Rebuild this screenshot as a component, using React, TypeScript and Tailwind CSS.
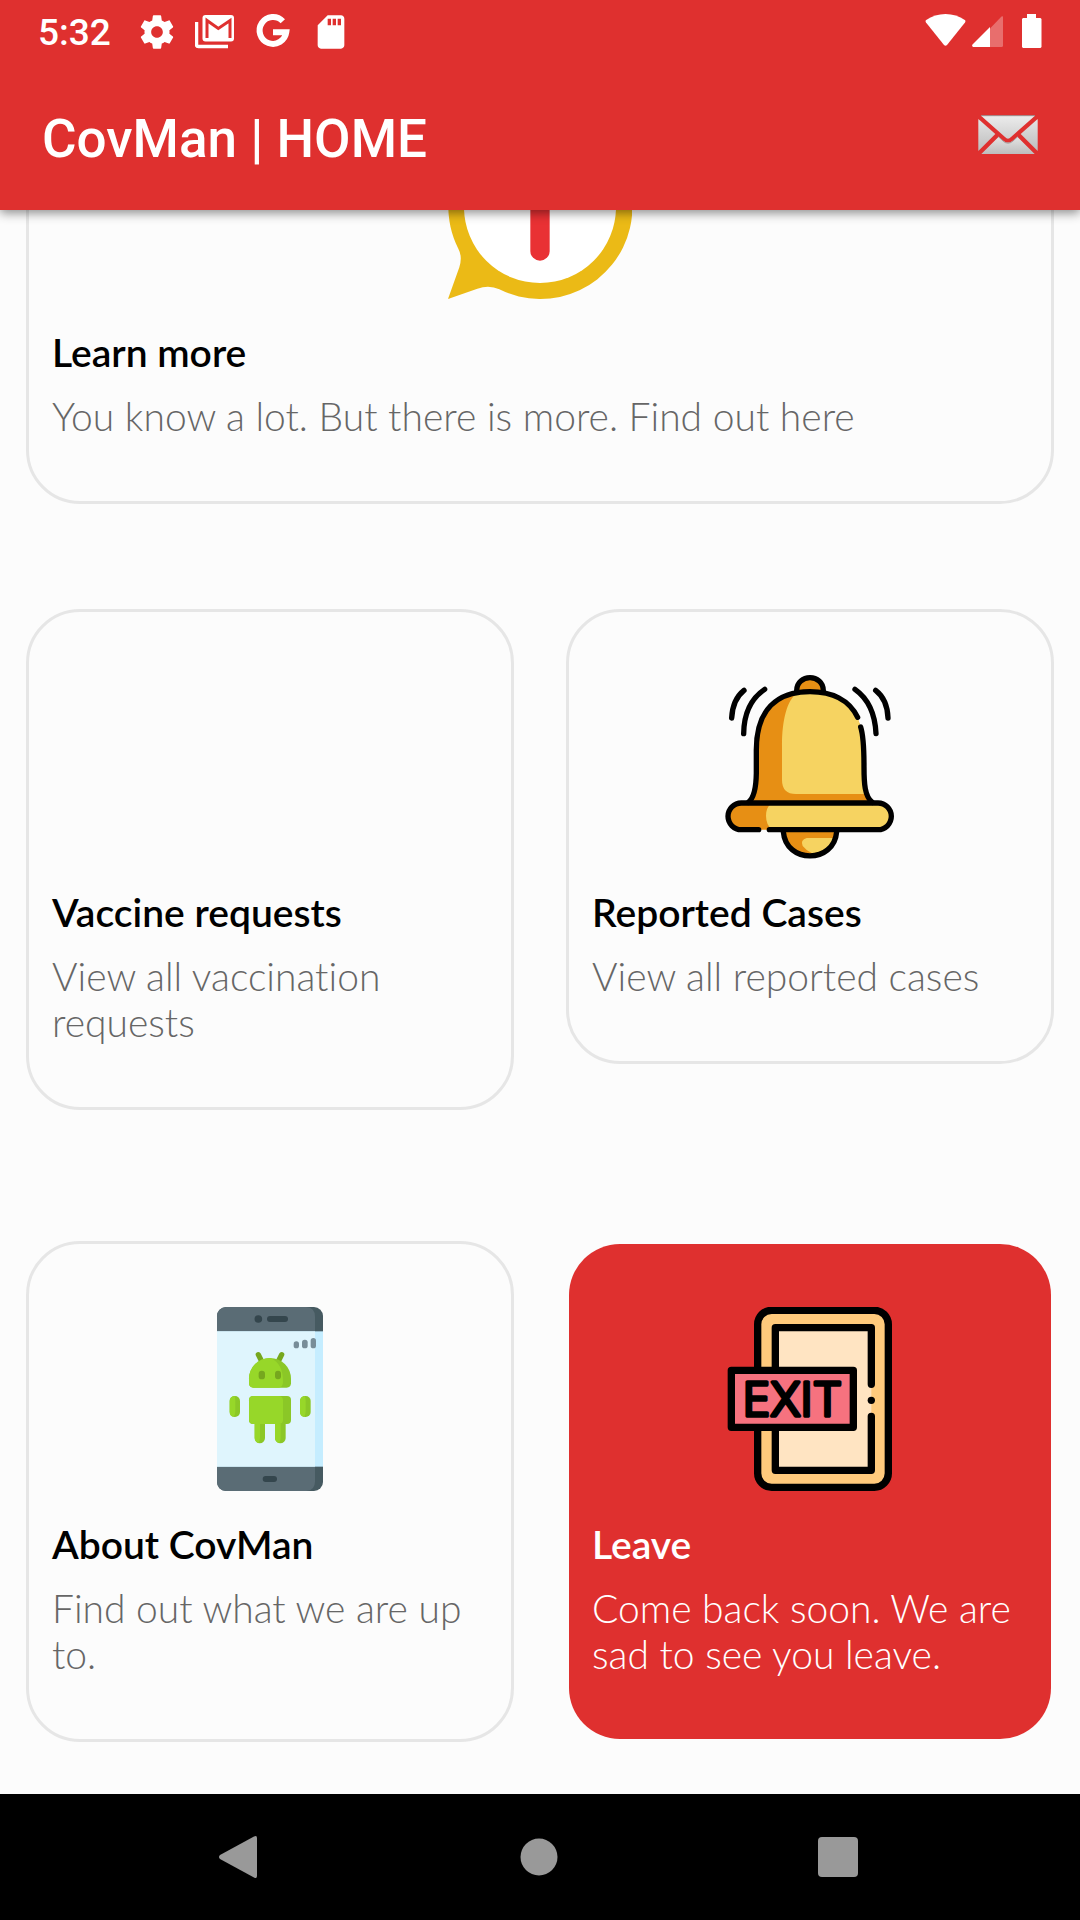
import type { ReactNode } from "react";

const STATUS_ICON = "h-10 w-10";

function GearIcon() {
  return (
    <svg viewBox="0 0 24 24" className={STATUS_ICON} fill="currentColor" aria-hidden="true">
      <path d="M19.43 12.98c.04-.32.07-.64.07-.98s-.03-.66-.07-.98l2.11-1.65c.19-.15.24-.42.12-.64l-2-3.46c-.12-.22-.39-.3-.61-.22l-2.49 1c-.52-.4-1.08-.73-1.69-.98l-.38-2.65A.488.488 0 0 0 14 2h-4c-.25 0-.46.18-.49.42l-.38 2.65c-.61.25-1.17.59-1.69.98l-2.49-1c-.23-.09-.49 0-.61.22l-2 3.46c-.13.22-.07.49.12.64l2.11 1.65c-.04.32-.07.65-.07.98s.03.66.07.98l-2.11 1.65c-.19.15-.24.42-.12.64l2 3.46c.12.22.39.3.61.22l2.49-1c.52.4 1.08.73 1.69.98l.38 2.65c.03.24.24.42.49.42h4c.25 0 .46-.18.49-.42l.38-2.65c.61-.25 1.17-.59 1.69-.98l2.49 1c.23.09.49 0 .61-.22l2-3.46c.12-.22.07-.49-.12-.64l-2.11-1.65zM12 15.5c-1.93 0-3.5-1.57-3.5-3.5s1.57-3.5 3.5-3.5 3.5 1.57 3.5 3.5-1.57 3.5-3.5 3.5z" />
    </svg>
  );
}

function MailStackIcon() {
  return (
    <svg viewBox="0 0 40 40" className={STATUS_ICON} fill="none" aria-hidden="true">
      <path d="M1.5 10v22.5a2 2 0 0 0 2 2H33" stroke="currentColor" strokeWidth="3.5" />
      <rect x="7.5" y="3" width="31.5" height="26.5" rx="3" fill="currentColor" />
      <path d="M12 26V8.500L23.300 16.500L35 8.500V26" stroke="#df302f" strokeWidth="3" />
    </svg>
  );
}

function GoogleIcon() {
  return (
    <svg viewBox="0 0 40 40" className={STATUS_ICON} fill="none" aria-hidden="true">
      <path d="M29.800 9.300A13.400 13.400 0 1 0 33.300 20.200H20" stroke="currentColor" strokeWidth="6" />
    </svg>
  );
}

function SdCardIcon() {
  return (
    <svg viewBox="0 0 24 24" className={STATUS_ICON} fill="currentColor" aria-hidden="true">
      <path d="M18 2h-8L4.020 8 4 20c0 1.100.9 2 2 2h12c1.100 0 2-.9 2-2V4c0-1.100-.9-2-2-2zm-6 6h-2V4h2v4zm3 0h-2V4h2v4zm3 0h-2V4h2v4z" />
    </svg>
  );
}

function WifiIcon() {
  return (
    <svg viewBox="0 0 41 40" className="h-10 w-[41px]" fill="currentColor" aria-hidden="true">
      <path d="M1 10.500Q0 9 1.200 8C12-.1 29-.1 39.800 8Q41 9 40 10.500L22 33Q20.500 34.500 19 33Z" />
    </svg>
  );
}

function SignalIcon() {
  return (
    <svg viewBox="0 0 32 40" className="h-10 w-8" fill="currentColor" aria-hidden="true">
      <path d="M18 16.500L29.500 4.600Q31 3.500 31 5V33.500Q31 35 29.500 35H18Z" opacity="0.3" />
      <path d="M18 15V35H1Q-.5 34 .5 32.500Z" />
    </svg>
  );
}

function BatteryIcon() {
  return (
    <svg viewBox="0 0 20 40" className="h-10 w-5" fill="currentColor" aria-hidden="true">
      <path d="M5 2H14V6H18.500L19.500 7V35L18.500 36H1L0 35V7L1 6H5Z" />
    </svg>
  );
}

function EnvelopeIcon() {
  return (
    <svg viewBox="0 0 180 120" className="h-10 w-[60px]" aria-hidden="true">
      <defs>
        <linearGradient id="paper" x1="0" y1="0" x2="0" y2="1">
          <stop offset="0" stopColor="#e4e4e4" />
          <stop offset="1" stopColor="#bdbdbd" />
        </linearGradient>
        <linearGradient id="flap" x1="0" y1="0" x2="0" y2="1">
          <stop offset="0" stopColor="#ececec" />
          <stop offset="1" stopColor="#cfcfcf" />
        </linearGradient>
      </defs>
      <path d="M9 2H171L99 66Q90 76 81 66Z" fill="url(#flap)" />
      <path d="M9 2H171" stroke="#9c8f8f" strokeWidth="3" />
      <path d="M1 12L52 57L1 108Z" fill="url(#paper)" />
      <path d="M179 12L128 57L179 108Z" fill="url(#paper)" />
      <path d="M10 117L62 65L76 77Q90 88 104 77L118 65L170 117Z" fill="url(#paper)" />
      <path d="M60 64L76 79Q90 90 104 79L120 64" fill="none" stroke="#8f8080" strokeWidth="3" opacity="0.7" />
    </svg>
  );
}

const ART = "mx-auto block h-[184px] w-[184px]";

function InfoArt() {
  return (
    <svg viewBox="84 -225 552 552" className={ART} aria-hidden="true">
      <path
        d="M360 -225A276 276 0 1 1 238 298Q208 284 172 296L84 327L118 232Q128 200 115 176A276 276 0 0 1 360 -225Z"
        fill="#ebba16"
      />
      <circle cx="360" cy="51" r="228" fill="#fff" />
      <path d="M360 -10V183" stroke="#e93134" strokeWidth="58" strokeLinecap="round" />
      <circle cx="360" cy="-90" r="30" fill="#e93134" />
    </svg>
  );
}

function BellArt() {
  return (
    <svg viewBox="54 75 552 552" className={ART} fill="none" strokeLinecap="round" aria-hidden="true">
      <path d="M290 125C290 70 370 70 370 125Z" fill="#e78f14" />
      <path d="M250 538C254 642 406 642 410 538Z" fill="#e78f14" />
      <path d="M401 564H320Q300 570 308 588Q320 603 336 610Q384 606 401 564Z" fill="#f6d361" />
      <path d="M155 457Q168 430 168 380V300C168 180 230 125 330 125C430 125 490 180 491 300V380Q491 430 506 457Z" fill="#e78f14" />
      <path d="M292 128C262 150 246 205 246 290V390Q246 432 288 432H496Q491 410 491 380V300C490 180 430 125 330 125Z" fill="#f6d361" />
      <rect x="84" y="459" width="490" height="80" rx="40" fill="#e78f14" />
      <path d="M210 464H536Q574 468 574 499Q574 536 536 539H216Q198 524 198 497Q198 474 210 464Z" fill="#f6d361" />
      <g stroke="#000" strokeWidth="16">
        <path d="M290 122C290 70 370 70 370 122" />
        <path d="M250 545C258 642 402 642 410 545" />
        <path d="M473 202C448 150 396 125 330 125C230 125 169 180 169 300V370Q168 440 145 457" />
        <path d="M482 231Q492 262 492 350C492 400 494 440 517 457" />
        <path d="M176 539H124A40 40 0 0 1 124 459H534A40 40 0 0 1 534 539H208" />
        <path d="M132 121Q98 148 95 204" />
        <path d="M194 118Q132 160 131 251" />
        <path d="M527 121Q562 148 564 204" />
        <path d="M465 118Q524 160 528 251" />
      </g>
    </svg>
  );
}

function PhoneArt() {
  return (
    <svg viewBox="-66 51 552 552" className={ART} aria-hidden="true">
      <rect x="51" y="51" width="318" height="552" rx="27" fill="#465a61" />
      <path d="M78 51H319Q345 53 345 80V575Q345 600 319 603H78Q51 600 51 575V80Q51 54 78 51Z" fill="#5a6c75" />
      <rect x="51" y="124" width="318" height="406" fill="#c5edff" />
      <rect x="51" y="124" width="294" height="406" fill="#dff5fd" />
      <g fill="#34464d">
        <circle cx="175" cy="87" r="11.500" />
        <rect x="201" y="78" width="63" height="18" rx="9" />
        <rect x="188" y="558" width="43" height="18" rx="9" />
      </g>
      <g fill="#788d98">
        <rect x="281" y="154" width="16" height="21" rx="8" />
        <rect x="306" y="149" width="17" height="26" rx="8" />
        <rect x="332" y="144" width="16" height="31" rx="8" />
      </g>
      <g stroke="#76a71e" strokeWidth="16" strokeLinecap="round">
        <path d="M175 194L184 212" />
        <path d="M245 194L236 212" />
      </g>
      <path d="M147 266A63 62 0 0 1 273 266V280Q272 293 260 293H160Q148 293 147 280Z" fill="#8bc727" />
      <path d="M147 266A63 62 0 0 1 210 204C238 214 249 240 249 275Q249 291 236 293H160Q148 293 147 280Z" fill="#97d729" />
      <rect x="147" y="318" width="126" height="84" rx="12" fill="#8bc727" />
      <path d="M159 318H238Q249 320 249 331V390Q249 401 238 402H159Q147 401 147 390V331Q147 319 159 318Z" fill="#97d729" />
      <g fill="#8bc727">
        <rect x="89" y="318" width="31" height="63" rx="15" />
        <rect x="300" y="318" width="32" height="63" rx="15" />
        <path d="M164 402H195V444A15 15 0 0 1 164 444Z" />
        <path d="M225 402H257V444A15 15 0 0 1 225 444Z" />
      </g>
      <g fill="#97d729">
        <path d="M104 318Q89 319 89 333V366Q89 378 100 381Q106 374 106 366V333Q106 324 104 318Z" />
        <path d="M315 318Q300 319 300 333V366Q300 378 311 381Q317 374 317 366V333Q317 324 315 318Z" />
        <path d="M164 402H180V444Q180 452 175 459Q164 455 164 444Z" />
        <path d="M225 402H242V444Q242 452 237 459Q225 455 225 444Z" />
      </g>
      <g fill="#76a71e">
        <rect x="176" y="242" width="19" height="26" rx="9.500" />
        <rect x="225" y="242" width="18" height="26" rx="9" />
      </g>
    </svg>
  );
}

function ExitArt() {
  return (
    <svg viewBox="24 51 552 552" className={ART} fill="none" aria-hidden="true">
      <rect x="143" y="61" width="392" height="531" rx="42" fill="#ffca7c" stroke="#000" strokeWidth="22" />
      <rect x="196" y="113" width="288" height="428" fill="#ffe4c2" />
      <path
        d="M484 283V113H196V541H484V379"
        stroke="#000"
        strokeWidth="22"
        strokeLinecap="round"
        strokeLinejoin="round"
      />
      <circle cx="484" cy="331" r="11" fill="#000" />
      <rect x="64" y="241" width="366" height="171" fill="#f6727f" stroke="#000" strokeWidth="22" strokeLinejoin="round" />
      <text
        x="247"
        y="377"
        textAnchor="middle"
        fontFamily="Inter, sans-serif"
        fontSize="138"
        fontWeight="300"
        fill="#000"
        stroke="#000"
        strokeWidth="11"
        strokeLinejoin="round"
      >
        EXIT
      </text>
    </svg>
  );
}

type CardProps = {
  href: string;
  title: string;
  text: string;
  art?: ReactNode;
  filled?: boolean;
};

function Card({ href, title, text, art, filled = false }: CardProps) {
  return (
    <a
      href={href}
      className={
        filled
          ? "block rounded-[54px] border-[3px] border-transparent bg-[#df302f] bg-clip-padding px-[23px] pt-[63px] pb-[62px] text-white"
          : "block rounded-[54px] border-[3px] border-[#e6e6e6] px-[23px] pt-[63px] pb-[62px] text-black"
      }
    >
      {art ?? <div className="h-[184px]" />}
      <h2 className="mt-[30px] text-[39px] leading-[46px] font-semibold">{title}</h2>
      <p
        className={
          filled
            ? "mt-[18px] text-[39px] leading-[46px] font-light"
            : "mt-[18px] text-[39px] leading-[46px] font-light text-[#666]"
        }
      >
        {text}
      </p>
    </a>
  );
}

export default function App() {
  return (
    <div className="flex min-h-screen flex-col bg-[#fcfcfc] font-['Lato',sans-serif] [font-variant-ligatures:none]">
      <header className="relative z-10 bg-[#df302f] font-['Roboto',sans-serif] text-white shadow-[0_3px_10px_rgba(0,0,0,0.45)]">
        <div className="flex h-16 items-center justify-between px-[38px]">
          <div className="flex items-center gap-[26px]">
            <span className="pt-0.5 text-[37px] font-medium">5:32</span>
            <div className="flex items-center gap-[18px]">
              <GearIcon />
              <MailStackIcon />
              <GoogleIcon />
              <SdCardIcon />
            </div>
          </div>
          <div className="flex items-center gap-1.5">
            <WifiIcon />
            <SignalIcon />
            <div className="ml-3">
              <BatteryIcon />
            </div>
          </div>
        </div>
        <div className="flex h-[146px] items-center justify-between px-[42px]">
          <h1 className="pt-1 text-[53px] leading-[60px] font-medium">CovMan | HOME</h1>
          <button type="button" aria-label="Messages" className="pb-1">
            <EnvelopeIcon />
          </button>
        </div>
      </header>

      <main className="flex-1 overflow-hidden px-[26px] pb-[52px]">
        <div className="-mt-[161px]">
          <Card
            href="#learn"
            title="Learn more"
            text="You know a lot. But there is more. Find out here"
            art={<InfoArt />}
          />
        </div>
        <div className="mt-[105px] grid grid-cols-2 items-start gap-[52px]">
          <Card href="#vaccines" title="Vaccine requests" text="View all vaccination requests" />
          <Card href="#cases" title="Reported Cases" text="View all reported cases" art={<BellArt />} />
        </div>
        <div className="mt-[131px] grid grid-cols-2 items-start gap-[52px]">
          <Card href="#about" title="About CovMan" text="Find out what we are up to." art={<PhoneArt />} />
          <Card
            href="#leave"
            title="Leave"
            text="Come back soon. We are sad to see you leave."
            art={<ExitArt />}
            filled
          />
        </div>
      </main>

      <nav className="grid h-[126px] grid-cols-3 bg-black px-[90px] text-[#999]">
        <button type="button" aria-label="Back" className="flex items-center justify-center">
          <svg viewBox="0 0 44 44" className="h-11 w-11" fill="currentColor" aria-hidden="true">
            <path d="M2 20L36 1.500Q39 0 39 3V41Q39 44 36 42.500L2 24Q0 22 2 20Z" />
          </svg>
        </button>
        <button type="button" aria-label="Home" className="flex items-center justify-center">
          <svg viewBox="0 0 44 44" className="h-11 w-11" fill="currentColor" aria-hidden="true">
            <circle cx="21" cy="22" r="18.500" />
          </svg>
        </button>
        <button type="button" aria-label="Recent apps" className="flex items-center justify-center">
          <svg viewBox="0 0 44 44" className="h-11 w-11" fill="currentColor" aria-hidden="true">
            <rect x="0" y="2" width="40" height="40" rx="4" />
          </svg>
        </button>
      </nav>
    </div>
  );
}
